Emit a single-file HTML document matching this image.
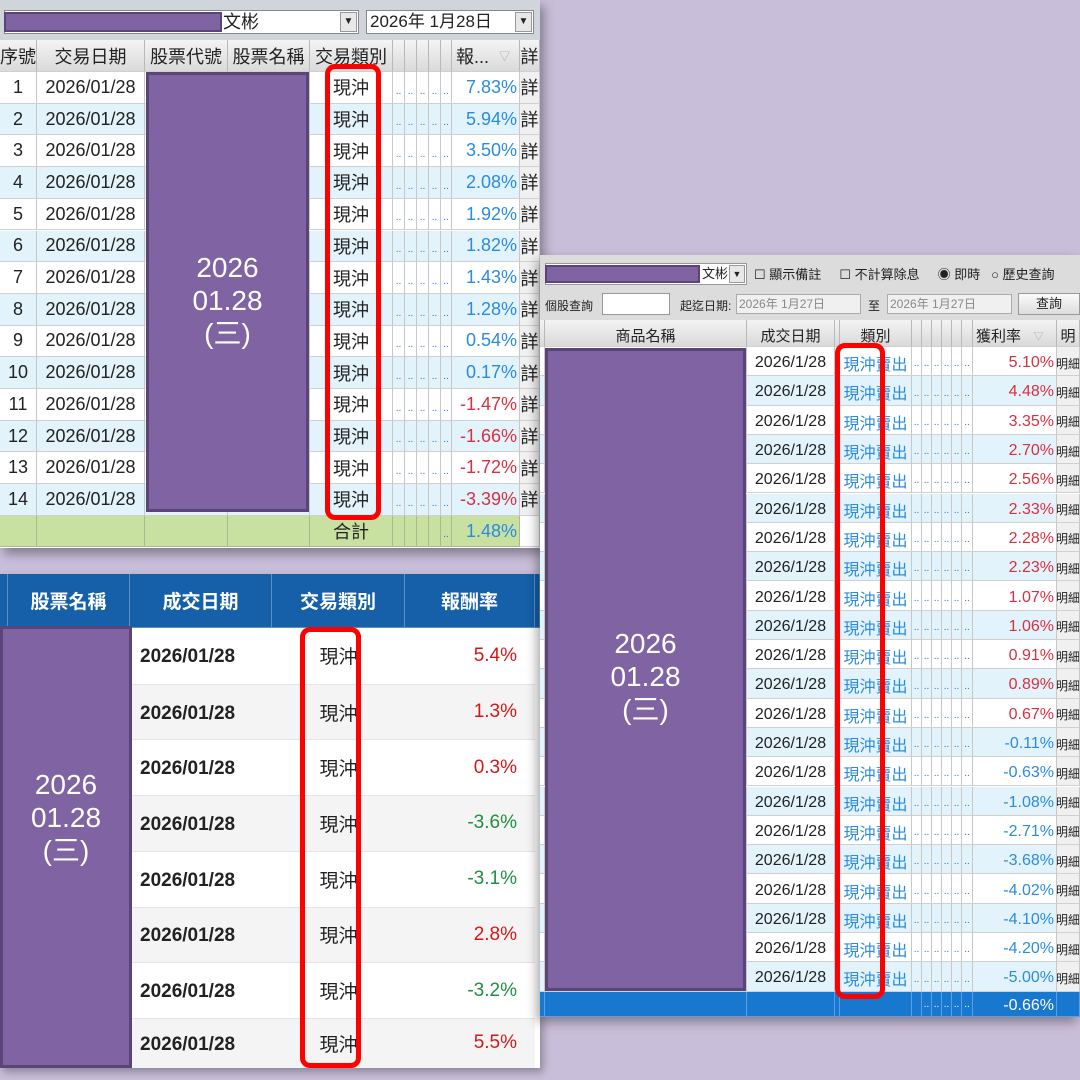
<!DOCTYPE html>
<html><head><meta charset="utf-8"><style>
*{margin:0;padding:0;box-sizing:border-box}
body{width:1080px;height:1080px;background:#c8bed9;position:relative;overflow:hidden;font-family:"Liberation Sans","Noto Sans CJK TC",sans-serif;color:#222}
.a{position:absolute}
.row{position:absolute;display:flex;left:0}
.row div{border-right:1px solid #c8c8c8;border-bottom:1px solid #d0d0d0;display:flex;align-items:center;justify-content:center;overflow:hidden;white-space:nowrap}
.p1 .row{height:31.7px;font-size:18px}
.p3 .row div{padding-top:4px}
.w{background:#fff}.b{background:#e2f3fb}
.r{justify-content:flex-end!important;padding-right:2px}
.bl{color:#2a8be0}.rd{color:#d83040}.gr{color:#1f9040}.rr{color:#d41818}
.dots{color:#2a6fd0;font-size:10px;align-items:flex-end!important;padding-bottom:6px}
.purple{background:#8063a3;border:3px solid #5a4578;color:#fff;font-size:28px;line-height:33px;text-align:center;display:flex;flex-direction:column;justify-content:center}
.red{border:5px solid #f00;border-radius:10px}
.btn{background:#f0f0f0}
.hd div{background:linear-gradient(#f4f4f4,#dadada);border-right:1px solid #b8b8b8}
</style></head><body>

<!-- Panel 1 -->
<div class="a p1" style="left:0;top:0;width:540px;height:548px;background:#fff;box-shadow:4px 6px 10px rgba(0,0,0,.35)">
 <div class="a" style="left:0;top:0;width:540px;height:40px;background:#cfd5da"></div>
 <div class="a" style="left:4px;top:10px;width:355px;height:24px;background:#fff;border:1px solid #888;font-size:18px;line-height:22px;padding-left:218px">文彬</div>
 <div class="a" style="left:340px;top:12px;width:17px;height:20px;background:#e8e8e8;border:1px solid #999;font-size:10px;text-align:center;line-height:18px">▼</div>
 <div class="a" style="left:4px;top:12px;width:218px;height:20px;background:#8063a3;border:2px solid #5a4578"></div>
 <div class="a" style="left:366px;top:10px;width:168px;height:24px;background:#fff;border:1px solid #888;font-size:17px;line-height:22px;padding-left:3px">2026年 1月28日</div>
 <div class="a" style="left:515px;top:12px;width:17px;height:20px;background:#e8e8e8;border:1px solid #999;font-size:10px;text-align:center;line-height:18px">▼</div>
 <div class="row hd" style="top:40px;height:32px;font-size:18px">
  <div style="width:37px">序號</div><div style="width:108px">交易日期</div><div style="width:83px">股票代號</div><div style="width:82px">股票名稱</div><div style="width:83px">交易類別</div><div style="width:12px"></div><div style="width:12px"></div><div style="width:12px"></div><div style="width:12px"></div><div style="width:11px"></div><div style="width:68px;justify-content:flex-start;padding-left:4px">報...&nbsp;&nbsp;<span style="color:#aaa;font-size:11px">▽</span></div><div style="width:20px">詳</div>
 </div>
 <div class="a" style="left:0;top:72px;width:540px">
  <div class="row w" style="top:0"><div style="width:37px">1</div><div style="width:108px">2026/01/28</div><div style="width:83px"></div><div style="width:82px"></div><div style="width:83px">現沖</div><div class="dots" style="width:12px">..</div><div class="dots" style="width:12px">..</div><div class="dots" style="width:12px">..</div><div class="dots" style="width:12px">..</div><div class="dots" style="width:11px">..</div><div class="r bl" style="width:68px">7.83%</div><div class="btn" style="width:20px">詳</div></div>
  <div class="row b" style="top:31.7px"><div style="width:37px">2</div><div style="width:108px">2026/01/28</div><div style="width:83px"></div><div style="width:82px"></div><div style="width:83px">現沖</div><div class="dots" style="width:12px">..</div><div class="dots" style="width:12px">..</div><div class="dots" style="width:12px">..</div><div class="dots" style="width:12px">..</div><div class="dots" style="width:11px">..</div><div class="r bl" style="width:68px">5.94%</div><div class="btn" style="width:20px">詳</div></div>
  <div class="row w" style="top:63.4px"><div style="width:37px">3</div><div style="width:108px">2026/01/28</div><div style="width:83px"></div><div style="width:82px"></div><div style="width:83px">現沖</div><div class="dots" style="width:12px">..</div><div class="dots" style="width:12px">..</div><div class="dots" style="width:12px">..</div><div class="dots" style="width:12px">..</div><div class="dots" style="width:11px">..</div><div class="r bl" style="width:68px">3.50%</div><div class="btn" style="width:20px">詳</div></div>
  <div class="row b" style="top:95.1px"><div style="width:37px">4</div><div style="width:108px">2026/01/28</div><div style="width:83px"></div><div style="width:82px"></div><div style="width:83px">現沖</div><div class="dots" style="width:12px">..</div><div class="dots" style="width:12px">..</div><div class="dots" style="width:12px">..</div><div class="dots" style="width:12px">..</div><div class="dots" style="width:11px">..</div><div class="r bl" style="width:68px">2.08%</div><div class="btn" style="width:20px">詳</div></div>
  <div class="row w" style="top:126.8px"><div style="width:37px">5</div><div style="width:108px">2026/01/28</div><div style="width:83px"></div><div style="width:82px"></div><div style="width:83px">現沖</div><div class="dots" style="width:12px">..</div><div class="dots" style="width:12px">..</div><div class="dots" style="width:12px">..</div><div class="dots" style="width:12px">..</div><div class="dots" style="width:11px">..</div><div class="r bl" style="width:68px">1.92%</div><div class="btn" style="width:20px">詳</div></div>
  <div class="row b" style="top:158.5px"><div style="width:37px">6</div><div style="width:108px">2026/01/28</div><div style="width:83px"></div><div style="width:82px"></div><div style="width:83px">現沖</div><div class="dots" style="width:12px">..</div><div class="dots" style="width:12px">..</div><div class="dots" style="width:12px">..</div><div class="dots" style="width:12px">..</div><div class="dots" style="width:11px">..</div><div class="r bl" style="width:68px">1.82%</div><div class="btn" style="width:20px">詳</div></div>
  <div class="row w" style="top:190.2px"><div style="width:37px">7</div><div style="width:108px">2026/01/28</div><div style="width:83px"></div><div style="width:82px"></div><div style="width:83px">現沖</div><div class="dots" style="width:12px">..</div><div class="dots" style="width:12px">..</div><div class="dots" style="width:12px">..</div><div class="dots" style="width:12px">..</div><div class="dots" style="width:11px">..</div><div class="r bl" style="width:68px">1.43%</div><div class="btn" style="width:20px">詳</div></div>
  <div class="row b" style="top:221.9px"><div style="width:37px">8</div><div style="width:108px">2026/01/28</div><div style="width:83px"></div><div style="width:82px"></div><div style="width:83px">現沖</div><div class="dots" style="width:12px">..</div><div class="dots" style="width:12px">..</div><div class="dots" style="width:12px">..</div><div class="dots" style="width:12px">..</div><div class="dots" style="width:11px">..</div><div class="r bl" style="width:68px">1.28%</div><div class="btn" style="width:20px">詳</div></div>
  <div class="row w" style="top:253.6px"><div style="width:37px">9</div><div style="width:108px">2026/01/28</div><div style="width:83px"></div><div style="width:82px"></div><div style="width:83px">現沖</div><div class="dots" style="width:12px">..</div><div class="dots" style="width:12px">..</div><div class="dots" style="width:12px">..</div><div class="dots" style="width:12px">..</div><div class="dots" style="width:11px">..</div><div class="r bl" style="width:68px">0.54%</div><div class="btn" style="width:20px">詳</div></div>
  <div class="row b" style="top:285.3px"><div style="width:37px">10</div><div style="width:108px">2026/01/28</div><div style="width:83px"></div><div style="width:82px"></div><div style="width:83px">現沖</div><div class="dots" style="width:12px">..</div><div class="dots" style="width:12px">..</div><div class="dots" style="width:12px">..</div><div class="dots" style="width:12px">..</div><div class="dots" style="width:11px">..</div><div class="r bl" style="width:68px">0.17%</div><div class="btn" style="width:20px">詳</div></div>
  <div class="row w" style="top:317px"><div style="width:37px">11</div><div style="width:108px">2026/01/28</div><div style="width:83px"></div><div style="width:82px"></div><div style="width:83px">現沖</div><div class="dots" style="width:12px">..</div><div class="dots" style="width:12px">..</div><div class="dots" style="width:12px">..</div><div class="dots" style="width:12px">..</div><div class="dots" style="width:11px">..</div><div class="r rd" style="width:68px">-1.47%</div><div class="btn" style="width:20px">詳</div></div>
  <div class="row b" style="top:348.7px"><div style="width:37px">12</div><div style="width:108px">2026/01/28</div><div style="width:83px"></div><div style="width:82px"></div><div style="width:83px">現沖</div><div class="dots" style="width:12px">..</div><div class="dots" style="width:12px">..</div><div class="dots" style="width:12px">..</div><div class="dots" style="width:12px">..</div><div class="dots" style="width:11px">..</div><div class="r rd" style="width:68px">-1.66%</div><div class="btn" style="width:20px">詳</div></div>
  <div class="row w" style="top:380.4px"><div style="width:37px">13</div><div style="width:108px">2026/01/28</div><div style="width:83px"></div><div style="width:82px"></div><div style="width:83px">現沖</div><div class="dots" style="width:12px">..</div><div class="dots" style="width:12px">..</div><div class="dots" style="width:12px">..</div><div class="dots" style="width:12px">..</div><div class="dots" style="width:11px">..</div><div class="r rd" style="width:68px">-1.72%</div><div class="btn" style="width:20px">詳</div></div>
  <div class="row b" style="top:412.1px"><div style="width:37px">14</div><div style="width:108px">2026/01/28</div><div style="width:83px"></div><div style="width:82px"></div><div style="width:83px">現沖</div><div class="dots" style="width:12px">..</div><div class="dots" style="width:12px">..</div><div class="dots" style="width:12px">..</div><div class="dots" style="width:12px">..</div><div class="dots" style="width:11px">..</div><div class="r rd" style="width:68px">-3.39%</div><div class="btn" style="width:20px">詳</div></div>
  <div class="row" style="top:443.8px;background:#c8e0a0"><div style="width:37px;border-color:#aab890"></div><div style="width:108px;border-color:#aab890"></div><div style="width:83px;border-color:#aab890"></div><div style="width:82px;border-color:#aab890"></div><div style="width:83px;border-color:#aab890">合計</div><div style="width:12px;border-color:#aab890"></div><div style="width:12px;border-color:#aab890"></div><div style="width:12px;border-color:#aab890"></div><div style="width:12px;border-color:#aab890"></div><div class="dots" style="width:11px;border-color:#aab890">..</div><div class="r bl" style="width:68px;border-color:#aab890">1.48%</div><div style="width:20px;background:#fff"></div></div>
 </div>
 <div class="a purple" style="left:146px;top:72px;width:163px;height:440px;padding-top:16px"><div>2026</div><div>01.28</div><div>(三)</div></div>
 <div class="a red" style="left:325px;top:64px;width:56px;height:456px"></div>
</div>

<!-- Panel 2 -->
<div class="a" style="left:0;top:574px;width:540px;height:494px;background:#fff;box-shadow:3px 4px 8px rgba(0,0,0,.3)">
 <div class="row" style="top:0;height:54px;background:#1560a8;color:#fff;font-weight:bold;font-size:19px">
  <div style="width:8px;border-color:#5d8fc4"></div><div style="width:122px;border-color:#5d8fc4">股票名稱</div><div style="width:142px;border-color:#5d8fc4">成交日期</div><div style="width:133px;border-color:#5d8fc4">交易類別</div><div style="width:130px;border-color:#5d8fc4">報酬率</div><div style="width:5px;border-color:#5d8fc4"></div>
 </div>
 <div class="a" style="left:0;top:54px;width:540px;font-size:19px">
  <div class="row" style="top:0;height:55.7px;background:#fff"><div style="width:130px;border:0"></div><div style="width:142px;border:0;font-weight:bold;justify-content:flex-start;padding-left:10px;padding-top:3px">2026/01/28</div><div style="width:133px;border:0">現沖</div><div class="r rr" style="width:130px;border:0;padding-right:18px">5.4%</div></div>
  <div class="row" style="top:55.7px;height:55.7px;background:#f4f4f4;border-top:1px solid #e4e4e4"><div style="width:130px;border:0"></div><div style="width:142px;border:0;font-weight:bold;justify-content:flex-start;padding-left:10px;padding-top:3px">2026/01/28</div><div style="width:133px;border:0">現沖</div><div class="r rr" style="width:130px;border:0;padding-right:18px">1.3%</div></div>
  <div class="row" style="top:111.4px;height:55.7px;background:#fff;border-top:1px solid #e4e4e4"><div style="width:130px;border:0"></div><div style="width:142px;border:0;font-weight:bold;justify-content:flex-start;padding-left:10px;padding-top:3px">2026/01/28</div><div style="width:133px;border:0">現沖</div><div class="r rr" style="width:130px;border:0;padding-right:18px">0.3%</div></div>
  <div class="row" style="top:167.1px;height:55.7px;background:#f4f4f4;border-top:1px solid #e4e4e4"><div style="width:130px;border:0"></div><div style="width:142px;border:0;font-weight:bold;justify-content:flex-start;padding-left:10px;padding-top:3px">2026/01/28</div><div style="width:133px;border:0">現沖</div><div class="r gr" style="width:130px;border:0;padding-right:18px">-3.6%</div></div>
  <div class="row" style="top:222.8px;height:55.7px;background:#fff;border-top:1px solid #e4e4e4"><div style="width:130px;border:0"></div><div style="width:142px;border:0;font-weight:bold;justify-content:flex-start;padding-left:10px;padding-top:3px">2026/01/28</div><div style="width:133px;border:0">現沖</div><div class="r gr" style="width:130px;border:0;padding-right:18px">-3.1%</div></div>
  <div class="row" style="top:278.5px;height:55.7px;background:#f4f4f4;border-top:1px solid #e4e4e4"><div style="width:130px;border:0"></div><div style="width:142px;border:0;font-weight:bold;justify-content:flex-start;padding-left:10px;padding-top:3px">2026/01/28</div><div style="width:133px;border:0">現沖</div><div class="r rr" style="width:130px;border:0;padding-right:18px">2.8%</div></div>
  <div class="row" style="top:334.2px;height:55.7px;background:#fff;border-top:1px solid #e4e4e4"><div style="width:130px;border:0"></div><div style="width:142px;border:0;font-weight:bold;justify-content:flex-start;padding-left:10px;padding-top:3px">2026/01/28</div><div style="width:133px;border:0">現沖</div><div class="r gr" style="width:130px;border:0;padding-right:18px">-3.2%</div></div>
  <div class="row" style="top:389.9px;height:50px;background:#f4f4f4;border-top:1px solid #e4e4e4"><div style="width:130px;border:0"></div><div style="width:142px;border:0;font-weight:bold;justify-content:flex-start;padding-left:10px;padding-top:3px">2026/01/28</div><div style="width:133px;border:0">現沖</div><div class="r rr" style="width:130px;border:0;padding-right:18px">5.5%</div></div>
 </div>
 <div class="a purple" style="left:0;top:52px;width:132px;height:442px;padding-bottom:60px"><div>2026</div><div>01.28</div><div>(三)</div></div>
 <div class="a red" style="left:300px;top:53px;width:61px;height:441px"></div>
</div>

<!-- Panel 3 -->
<div class="a p3" style="left:540px;top:255px;width:540px;height:762px;background:#fff;box-shadow:-3px 5px 10px rgba(0,0,0,.35)">
 <div class="a" style="left:0;top:0;width:540px;height:65px;background:#dcdcdc;font-size:12px"></div>
 <div class="a" style="left:5px;top:8px;width:202px;height:22px;background:#fff;border:1px solid #999;font-size:13px;line-height:20px;padding-left:156px">文彬</div>
 <div class="a" style="left:5px;top:10px;width:155px;height:18px;background:#8063a3;border:2px solid #5a4578"></div>
 <div class="a" style="left:189px;top:10px;width:16px;height:18px;background:#e8e8e8;border:1px solid #999;font-size:9px;text-align:center;line-height:16px">▼</div>
 <div class="a" style="left:214px;top:9px;font-size:13px;white-space:nowrap">☐ 顯示備註&nbsp;&nbsp;&nbsp;&nbsp;&nbsp;☐ 不計算除息&nbsp;&nbsp;&nbsp;&nbsp;&nbsp;◉ 即時&nbsp;&nbsp;&nbsp;○ 歷史查詢</div>
 <div class="a" style="left:5px;top:42px;font-size:12px;white-space:nowrap">個股查詢</div>
 <div class="a" style="left:62px;top:38px;width:68px;height:22px;background:#fff;border:1px solid #999"></div>
 <div class="a" style="left:140px;top:42px;font-size:12px;white-space:nowrap">起迄日期:</div>
 <div class="a" style="left:196px;top:39px;width:125px;height:20px;background:#f0f0f0;border:1px solid #aaa;font-size:12px;color:#888;line-height:18px;padding-left:2px">2026年 1月27日</div>
 <div class="a" style="left:328px;top:42px;font-size:12px">至</div>
 <div class="a" style="left:347px;top:39px;width:125px;height:20px;background:#f0f0f0;border:1px solid #aaa;font-size:12px;color:#888;line-height:18px;padding-left:2px">2026年 1月27日</div>
 <div class="a" style="left:478px;top:38px;width:62px;height:22px;background:linear-gradient(#fafafa,#ddd);border:1px solid #999;font-size:13px;line-height:20px;text-align:center">查詢</div>
 <div class="row hd" style="top:65px;height:27px;font-size:15px">
  <div style="width:5px"></div><div style="width:202px">商品名稱</div><div style="width:88px">成交日期</div><div style="width:5px"></div><div style="width:72px">類別</div><div style="width:10px"></div><div style="width:10px"></div><div style="width:10px"></div><div style="width:10px"></div><div style="width:10px"></div><div style="width:11px"></div><div style="width:84px;justify-content:flex-start;padding-left:3px">獲利率&nbsp;&nbsp;&nbsp;<span style="color:#aaa;font-size:10px">▽</span></div><div style="width:23px">明</div>
 </div>
 <div class="a" style="left:0;top:92px;width:540px;font-size:16px">
  <div class="row w" style="top:0;height:29.3px"><div style="width:5px"></div><div style="width:202px"></div><div style="width:88px">2026/1/28</div><div style="width:5px"></div><div class="bl" style="width:72px">現沖賣出</div><div class="dots" style="width:10px">..</div><div class="dots" style="width:10px">..</div><div class="dots" style="width:10px">..</div><div class="dots" style="width:10px">..</div><div class="dots" style="width:10px">..</div><div class="dots rd" style="width:11px">..</div><div class="r rd" style="width:84px">5.10%</div><div class="btn" style="width:23px;font-size:12px">明細</div></div>
  <div class="row b" style="top:29.3px;height:29.3px"><div style="width:5px"></div><div style="width:202px"></div><div style="width:88px">2026/1/28</div><div style="width:5px"></div><div class="bl" style="width:72px">現沖賣出</div><div class="dots" style="width:10px">..</div><div class="dots" style="width:10px">..</div><div class="dots" style="width:10px">..</div><div class="dots" style="width:10px">..</div><div class="dots" style="width:10px">..</div><div class="dots rd" style="width:11px">..</div><div class="r rd" style="width:84px">4.48%</div><div class="btn" style="width:23px;font-size:12px">明細</div></div>
  <div class="row w" style="top:58.6px;height:29.3px"><div style="width:5px"></div><div style="width:202px"></div><div style="width:88px">2026/1/28</div><div style="width:5px"></div><div class="bl" style="width:72px">現沖賣出</div><div class="dots" style="width:10px">..</div><div class="dots" style="width:10px">..</div><div class="dots" style="width:10px">..</div><div class="dots" style="width:10px">..</div><div class="dots" style="width:10px">..</div><div class="dots rd" style="width:11px">..</div><div class="r rd" style="width:84px">3.35%</div><div class="btn" style="width:23px;font-size:12px">明細</div></div>
  <div class="row b" style="top:87.9px;height:29.3px"><div style="width:5px"></div><div style="width:202px"></div><div style="width:88px">2026/1/28</div><div style="width:5px"></div><div class="bl" style="width:72px">現沖賣出</div><div class="dots" style="width:10px">..</div><div class="dots" style="width:10px">..</div><div class="dots" style="width:10px">..</div><div class="dots" style="width:10px">..</div><div class="dots" style="width:10px">..</div><div class="dots rd" style="width:11px">..</div><div class="r rd" style="width:84px">2.70%</div><div class="btn" style="width:23px;font-size:12px">明細</div></div>
  <div class="row w" style="top:117.2px;height:29.3px"><div style="width:5px"></div><div style="width:202px"></div><div style="width:88px">2026/1/28</div><div style="width:5px"></div><div class="bl" style="width:72px">現沖賣出</div><div class="dots" style="width:10px">..</div><div class="dots" style="width:10px">..</div><div class="dots" style="width:10px">..</div><div class="dots" style="width:10px">..</div><div class="dots" style="width:10px">..</div><div class="dots rd" style="width:11px">..</div><div class="r rd" style="width:84px">2.56%</div><div class="btn" style="width:23px;font-size:12px">明細</div></div>
  <div class="row b" style="top:146.5px;height:29.3px"><div style="width:5px"></div><div style="width:202px"></div><div style="width:88px">2026/1/28</div><div style="width:5px"></div><div class="bl" style="width:72px">現沖賣出</div><div class="dots" style="width:10px">..</div><div class="dots" style="width:10px">..</div><div class="dots" style="width:10px">..</div><div class="dots" style="width:10px">..</div><div class="dots" style="width:10px">..</div><div class="dots rd" style="width:11px">..</div><div class="r rd" style="width:84px">2.33%</div><div class="btn" style="width:23px;font-size:12px">明細</div></div>
  <div class="row w" style="top:175.8px;height:29.3px"><div style="width:5px"></div><div style="width:202px"></div><div style="width:88px">2026/1/28</div><div style="width:5px"></div><div class="bl" style="width:72px">現沖賣出</div><div class="dots" style="width:10px">..</div><div class="dots" style="width:10px">..</div><div class="dots" style="width:10px">..</div><div class="dots" style="width:10px">..</div><div class="dots" style="width:10px">..</div><div class="dots rd" style="width:11px">..</div><div class="r rd" style="width:84px">2.28%</div><div class="btn" style="width:23px;font-size:12px">明細</div></div>
  <div class="row b" style="top:205.1px;height:29.3px"><div style="width:5px"></div><div style="width:202px"></div><div style="width:88px">2026/1/28</div><div style="width:5px"></div><div class="bl" style="width:72px">現沖賣出</div><div class="dots" style="width:10px">..</div><div class="dots" style="width:10px">..</div><div class="dots" style="width:10px">..</div><div class="dots" style="width:10px">..</div><div class="dots" style="width:10px">..</div><div class="dots rd" style="width:11px">..</div><div class="r rd" style="width:84px">2.23%</div><div class="btn" style="width:23px;font-size:12px">明細</div></div>
  <div class="row w" style="top:234.4px;height:29.3px"><div style="width:5px"></div><div style="width:202px"></div><div style="width:88px">2026/1/28</div><div style="width:5px"></div><div class="bl" style="width:72px">現沖賣出</div><div class="dots" style="width:10px">..</div><div class="dots" style="width:10px">..</div><div class="dots" style="width:10px">..</div><div class="dots" style="width:10px">..</div><div class="dots" style="width:10px">..</div><div class="dots rd" style="width:11px">..</div><div class="r rd" style="width:84px">1.07%</div><div class="btn" style="width:23px;font-size:12px">明細</div></div>
  <div class="row b" style="top:263.7px;height:29.3px"><div style="width:5px"></div><div style="width:202px"></div><div style="width:88px">2026/1/28</div><div style="width:5px"></div><div class="bl" style="width:72px">現沖賣出</div><div class="dots" style="width:10px">..</div><div class="dots" style="width:10px">..</div><div class="dots" style="width:10px">..</div><div class="dots" style="width:10px">..</div><div class="dots" style="width:10px">..</div><div class="dots rd" style="width:11px">..</div><div class="r rd" style="width:84px">1.06%</div><div class="btn" style="width:23px;font-size:12px">明細</div></div>
  <div class="row w" style="top:293px;height:29.3px"><div style="width:5px"></div><div style="width:202px"></div><div style="width:88px">2026/1/28</div><div style="width:5px"></div><div class="bl" style="width:72px">現沖賣出</div><div class="dots" style="width:10px">..</div><div class="dots" style="width:10px">..</div><div class="dots" style="width:10px">..</div><div class="dots" style="width:10px">..</div><div class="dots" style="width:10px">..</div><div class="dots rd" style="width:11px">..</div><div class="r rd" style="width:84px">0.91%</div><div class="btn" style="width:23px;font-size:12px">明細</div></div>
  <div class="row b" style="top:322.3px;height:29.3px"><div style="width:5px"></div><div style="width:202px"></div><div style="width:88px">2026/1/28</div><div style="width:5px"></div><div class="bl" style="width:72px">現沖賣出</div><div class="dots" style="width:10px">..</div><div class="dots" style="width:10px">..</div><div class="dots" style="width:10px">..</div><div class="dots" style="width:10px">..</div><div class="dots" style="width:10px">..</div><div class="dots rd" style="width:11px">..</div><div class="r rd" style="width:84px">0.89%</div><div class="btn" style="width:23px;font-size:12px">明細</div></div>
  <div class="row w" style="top:351.6px;height:29.3px"><div style="width:5px"></div><div style="width:202px"></div><div style="width:88px">2026/1/28</div><div style="width:5px"></div><div class="bl" style="width:72px">現沖賣出</div><div class="dots" style="width:10px">..</div><div class="dots" style="width:10px">..</div><div class="dots" style="width:10px">..</div><div class="dots" style="width:10px">..</div><div class="dots" style="width:10px">..</div><div class="dots rd" style="width:11px">..</div><div class="r rd" style="width:84px">0.67%</div><div class="btn" style="width:23px;font-size:12px">明細</div></div>
  <div class="row b" style="top:380.9px;height:29.3px"><div style="width:5px"></div><div style="width:202px"></div><div style="width:88px">2026/1/28</div><div style="width:5px"></div><div class="bl" style="width:72px">現沖賣出</div><div class="dots" style="width:10px">..</div><div class="dots" style="width:10px">..</div><div class="dots" style="width:10px">..</div><div class="dots" style="width:10px">..</div><div class="dots" style="width:10px">..</div><div class="dots" style="width:11px">..</div><div class="r bl" style="width:84px">-0.11%</div><div class="btn" style="width:23px;font-size:12px">明細</div></div>
  <div class="row w" style="top:410.2px;height:29.3px"><div style="width:5px"></div><div style="width:202px"></div><div style="width:88px">2026/1/28</div><div style="width:5px"></div><div class="bl" style="width:72px">現沖賣出</div><div class="dots" style="width:10px">..</div><div class="dots" style="width:10px">..</div><div class="dots" style="width:10px">..</div><div class="dots" style="width:10px">..</div><div class="dots" style="width:10px">..</div><div class="dots" style="width:11px">..</div><div class="r bl" style="width:84px">-0.63%</div><div class="btn" style="width:23px;font-size:12px">明細</div></div>
  <div class="row b" style="top:439.5px;height:29.3px"><div style="width:5px"></div><div style="width:202px"></div><div style="width:88px">2026/1/28</div><div style="width:5px"></div><div class="bl" style="width:72px">現沖賣出</div><div class="dots" style="width:10px">..</div><div class="dots" style="width:10px">..</div><div class="dots" style="width:10px">..</div><div class="dots" style="width:10px">..</div><div class="dots" style="width:10px">..</div><div class="dots" style="width:11px">..</div><div class="r bl" style="width:84px">-1.08%</div><div class="btn" style="width:23px;font-size:12px">明細</div></div>
  <div class="row w" style="top:468.8px;height:29.3px"><div style="width:5px"></div><div style="width:202px"></div><div style="width:88px">2026/1/28</div><div style="width:5px"></div><div class="bl" style="width:72px">現沖賣出</div><div class="dots" style="width:10px">..</div><div class="dots" style="width:10px">..</div><div class="dots" style="width:10px">..</div><div class="dots" style="width:10px">..</div><div class="dots" style="width:10px">..</div><div class="dots" style="width:11px">..</div><div class="r bl" style="width:84px">-2.71%</div><div class="btn" style="width:23px;font-size:12px">明細</div></div>
  <div class="row b" style="top:498.1px;height:29.3px"><div style="width:5px"></div><div style="width:202px"></div><div style="width:88px">2026/1/28</div><div style="width:5px"></div><div class="bl" style="width:72px">現沖賣出</div><div class="dots" style="width:10px">..</div><div class="dots" style="width:10px">..</div><div class="dots" style="width:10px">..</div><div class="dots" style="width:10px">..</div><div class="dots" style="width:10px">..</div><div class="dots" style="width:11px">..</div><div class="r bl" style="width:84px">-3.68%</div><div class="btn" style="width:23px;font-size:12px">明細</div></div>
  <div class="row w" style="top:527.4px;height:29.3px"><div style="width:5px"></div><div style="width:202px"></div><div style="width:88px">2026/1/28</div><div style="width:5px"></div><div class="bl" style="width:72px">現沖賣出</div><div class="dots" style="width:10px">..</div><div class="dots" style="width:10px">..</div><div class="dots" style="width:10px">..</div><div class="dots" style="width:10px">..</div><div class="dots" style="width:10px">..</div><div class="dots" style="width:11px">..</div><div class="r bl" style="width:84px">-4.02%</div><div class="btn" style="width:23px;font-size:12px">明細</div></div>
  <div class="row b" style="top:556.7px;height:29.3px"><div style="width:5px"></div><div style="width:202px"></div><div style="width:88px">2026/1/28</div><div style="width:5px"></div><div class="bl" style="width:72px">現沖賣出</div><div class="dots" style="width:10px">..</div><div class="dots" style="width:10px">..</div><div class="dots" style="width:10px">..</div><div class="dots" style="width:10px">..</div><div class="dots" style="width:10px">..</div><div class="dots" style="width:11px">..</div><div class="r bl" style="width:84px">-4.10%</div><div class="btn" style="width:23px;font-size:12px">明細</div></div>
  <div class="row w" style="top:586px;height:29.3px"><div style="width:5px"></div><div style="width:202px"></div><div style="width:88px">2026/1/28</div><div style="width:5px"></div><div class="bl" style="width:72px">現沖賣出</div><div class="dots" style="width:10px">..</div><div class="dots" style="width:10px">..</div><div class="dots" style="width:10px">..</div><div class="dots" style="width:10px">..</div><div class="dots" style="width:10px">..</div><div class="dots" style="width:11px">..</div><div class="r bl" style="width:84px">-4.20%</div><div class="btn" style="width:23px;font-size:12px">明細</div></div>
  <div class="row b" style="top:615.3px;height:29.3px"><div style="width:5px"></div><div style="width:202px"></div><div style="width:88px">2026/1/28</div><div style="width:5px"></div><div class="bl" style="width:72px">現沖賣出</div><div class="dots" style="width:10px">..</div><div class="dots" style="width:10px">..</div><div class="dots" style="width:10px">..</div><div class="dots" style="width:10px">..</div><div class="dots" style="width:10px">..</div><div class="dots" style="width:11px">..</div><div class="r bl" style="width:84px">-5.00%</div><div class="btn" style="width:23px;font-size:12px">明細</div></div>
  <div class="row" style="top:644.6px;height:25.4px;background:#1878d0;color:#fff"><div style="width:5px;border-color:#5aa0e0"></div><div style="width:202px;border-color:#5aa0e0"></div><div style="width:88px;border-color:#5aa0e0"></div><div style="width:5px;border-color:#5aa0e0"></div><div style="width:72px;border-color:#5aa0e0"></div><div style="width:10px;border-color:#5aa0e0"></div><div style="width:10px;border-color:#5aa0e0;color:#fff" class="dots">..</div><div style="width:10px;border-color:#5aa0e0;color:#fff" class="dots">..</div><div style="width:10px;border-color:#5aa0e0;color:#fff" class="dots">..</div><div style="width:10px;border-color:#5aa0e0;color:#fff" class="dots">..</div><div style="width:11px;border-color:#5aa0e0;color:#fff" class="dots">..</div><div class="r" style="width:84px;border-color:#5aa0e0">-0.66%</div><div style="width:23px;border-color:#5aa0e0"></div></div>
 </div>
 <div class="a purple" style="left:5px;top:93px;width:201px;height:643px;padding-top:14px"><div>2026</div><div>01.28</div><div>(三)</div></div>
 <div class="a red" style="left:295px;top:88px;width:50px;height:656px"></div>
</div>
</body></html>
